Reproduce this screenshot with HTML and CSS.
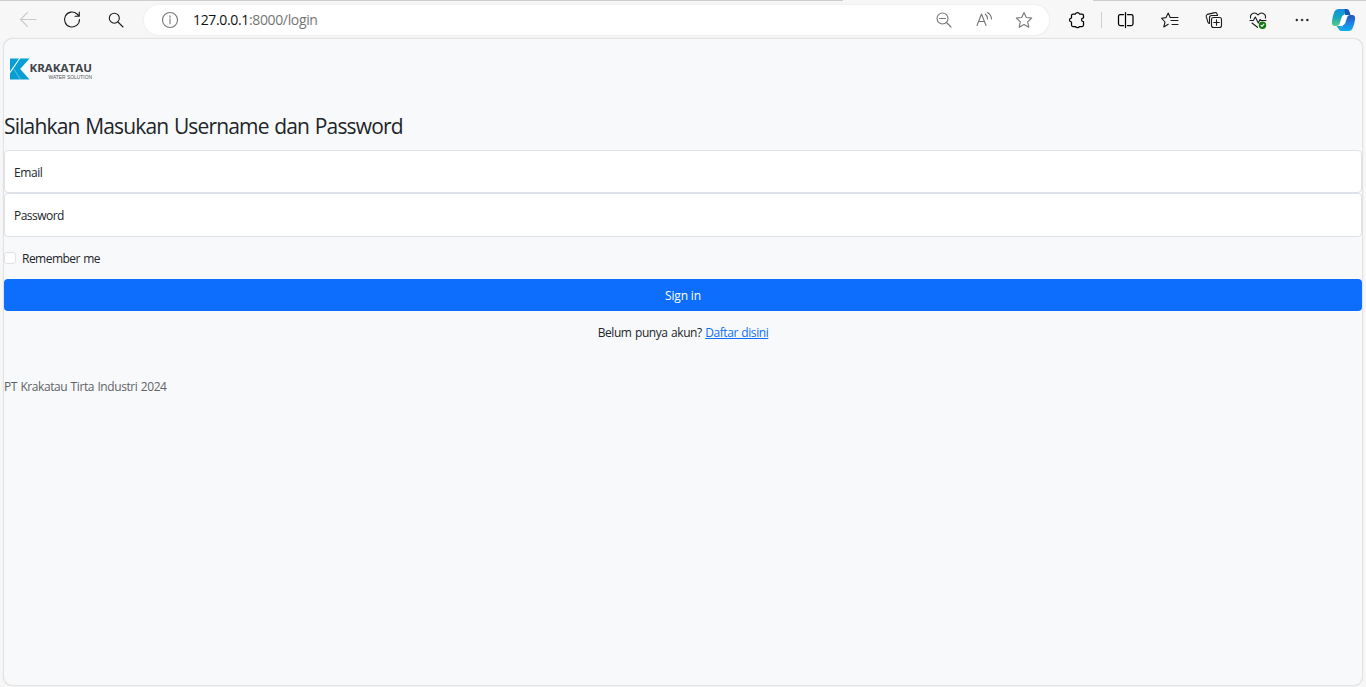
FILE: index.html
```html
<!DOCTYPE html>
<html lang="id">
<head>
<meta charset="utf-8">
<title>Login</title>
<link rel="stylesheet" href="styles.css">
</head>
<body>
<div class="browser">
  <div class="tabline"><span class="tabline-left"></span><span class="tabline-right"></span></div>
  <header class="toolbar">
    <svg class="ico back" viewBox="0 0 24 24"><path d="M20 11.5H4.5M11.5 4.5l-7 7 7 7"/></svg>
    <svg class="ico dark" viewBox="0 0 24 24"><path d="M19.5 11.5a7.5 7.5 0 1 1-2.4-5.5l2 2M19.3 4v4.2h-4.3"/></svg>
    <svg class="ico dark" viewBox="0 0 24 24"><circle cx="10.3" cy="10.2" r="5"/><path d="M14 14l5 5"/></svg>
    <div class="address">
      <svg class="ico grey" viewBox="0 0 24 24"><circle cx="12" cy="12" r="7.5"/><path d="M12 10.7v5M12 7.7v1.5"/></svg>
      <div class="url">127.0.0.1<span class="path">:8000/login</span></div>
      <div class="actions">
        <svg class="ico grey" viewBox="0 0 24 24"><circle cx="10.5" cy="10.5" r="5.5"/><path d="M14.5 14.5l4.5 4.5M7.5 10.5h6"/></svg>
        <svg class="ico grey" viewBox="0 0 24 24"><path d="M5 17.5L9.500 6 14 17.500M6.700 13.500h5.600M13.200 6q2.300 1.700 2.300 5M15.500 4.500q3.700 2.300 4 6.500"/></svg>
        <svg class="ico grey" viewBox="0 0 24 24"><path d="M12 4.500l2.300 5 5.400.6-4 3.700 1.100 5.500-4.800-2.700-4.800 2.700 1.100-5.500-4-3.700 5.400-.6z"/></svg>
      </div>
    </div>
    <svg class="ico dark bold ext" viewBox="0 0 24 24"><path d="M8 6h2.500q.3-1.500 2-1.500t2 1.500H17Q18.500 6 18.500 7.500v2.300q-2 .2-2 1.900t2 1.900v3.400q0 1.500-1.500 1.500h-2.500q-.5 1.200-2 1.200t-2-1.200H8Q6.500 18.500 6.500 17v-3q-2-.3-2-2t2-2V7.500Q6.500 6 8 6z"/></svg>
    <span class="divider"></span>
    <div class="tools">
      <svg class="ico dark bold" viewBox="0 0 24 24"><path d="M9.500 6.500H6.300Q4.500 6.500 4.500 8.300v7.400q0 1.800 1.800 1.800h3.200M13.500 6.500h3.700q1.800 0 1.800 1.800v7.400q0 1.800-1.800 1.800h-3.700M11.500 4.500v15"/></svg>
      <svg class="ico dark" viewBox="0 0 24 24"><path d="M14 9.500h-1.800L10.200 5 8 9.600l-4.500.6L7 14l-1.200 5 4.400-2.700M14 9.500h6M13 12.500h7M14 16.500h6"/></svg>
      <svg class="ico dark" viewBox="0 0 24 24"><rect x="9.500" y="9.500" width="10" height="10" rx="2"/><path d="M14.500 11.700v5.600M11.700 14.500h5.600M7.500 15.500q-1.200-.2-1.600-1.400L4.200 8.400q-.3-1.500 1.200-2l7.500-1.800q1.500-.4 2 1l.6 1.500M7.500 15.500V9.700Q7.500 7.500 9.700 7.500h5.800"/></svg>
      <svg class="ico dark" viewBox="0 0 24 24"><path d="M4.600 10.200c-1-4.700 4.200-7 7.400-3.200 3.200-3.800 8.400-1.500 7.400 3.200M4 12.500h3.300l2-3.500 3 6 1.700-3.500 1 1H20M6 15l5.500 4.300"/><circle class="ok" cx="16.500" cy="17.200" r="3.700"/><path class="tick" d="M15 17.300l1 1 2-2.200"/></svg>
      <svg class="ico dots" viewBox="0 0 24 24"><circle cx="6.700" cy="12" r=".9"/><circle cx="12" cy="12" r=".9"/><circle cx="17.300" cy="12" r=".9"/></svg>
    </div>
    <svg class="copilot" viewBox="0 0 24 24">
      <defs>
        <linearGradient id="left" x1="0" y1="0" x2="0" y2="1"><stop offset="0" stop-color="#128fe0"/><stop offset=".5" stop-color="#19a5bf"/><stop offset="1" stop-color="#5ccc80"/></linearGradient>
        <linearGradient id="right" x1="0" y1="0" x2="0" y2="1"><stop offset="0" stop-color="#2356b5"/><stop offset=".5" stop-color="#1e7fe5"/><stop offset="1" stop-color="#0daff0"/></linearGradient>
      </defs>
      <path fill="url(#left)" d="M7 1h8.500l-3 6q-1.700.3-2.300 2L8 16q-.8 2-3 2H3.500Q0 18 .4 13.500 1 8 3 3.500 4 1 7 1z"/>
      <path fill="url(#right)" d="M17 23H8.500l3-6q1.700-.3 2.300-2L16 8.500Q16.700 7 18.500 7h2q3.500 0 3.100 4.300Q23 16 21 20.500 20 23 17 23z"/>
      <path fill="#1459bb" d="M13 1h2.500q2 .2 2.700 3l.8 3h-5.500z"/>
      <path fill="#14a8df" d="M5 18h5.500l-.5 5q-2.500 0-3.300-2.700z"/>
      <path fill="#fff" d="M11.500 7.500h4l-3 8.500q-.3 1-1.500 1H8.500l2-7z"/>
    </svg>
  </header>

  <main class="page">
    <svg class="logo" viewBox="0 0 84 23" role="img" aria-label="Krakatau Water Solution">
      <path fill="#079fd3" d="M0 .5h9L0 13.500zM10.200.5h9.300L10.200 11 19.500 21.500H0V15.500z"/>
      <path stroke="#f8f9fb" stroke-opacity=".6" stroke-width=".6" d="M3.500 10.500l7 11"/>
      <text class="logo-name" x="19.500" y="14" textLength="62.500" lengthAdjust="spacingAndGlyphs">KRAKATAU</text>
      <text class="logo-sub" x="38.500" y="20.500" textLength="43.500" lengthAdjust="spacingAndGlyphs">WATER SOLUTION</text>
    </svg>
    <h1 class="title">Silahkan Masukan Username dan Password</h1>
    <form class="login">
      <div class="field"><span class="t-email">Email</span></div>
      <div class="field"><span class="t-password">Password</span></div>
      <div class="remember"><span class="box"></span><span class="t-remember">Remember me</span></div>
      <button class="submit" type="button">Sign in</button>
    </form>
    <p class="register">Belum punya akun? <a class="link" href="#">Daftar disini</a></p>
    <p class="copyright">PT Krakatau Tirta Industri 2024</p>
  </main>
</div>
</body>
</html>
```

FILE: styles.css
```css
* { box-sizing: border-box; }

body {
  margin: 0;
  font-family: "Open Sans", "Noto Sans", sans-serif;
  font-size: 12px;
  line-height: 18px;
  letter-spacing: -.42px;
  word-spacing: .7px;
  color: #212529;
}

.browser {
  display: flex;
  flex-direction: column;
  height: 687px;
  background: #f7f7f7;
  overflow: hidden;
}

.tabline { display: flex; justify-content: space-between; height: 1px; }
.tabline-left { width: 843px; background: #cdcdcd; }
.tabline-right { width: 273px; background: #cdcdcd; }

.toolbar {
  display: flex;
  align-items: center;
  height: 38px;
  padding-left: 16px;
}

.toolbar > .ico + .ico { margin-left: 20px; }
.ico {
  flex: none;
  width: 24px;
  height: 24px;
  fill: none;
  stroke-width: 1.1;
  stroke-linecap: round;
  stroke-linejoin: round;
}
.dark { stroke: #1b1b1b; }
.bold { stroke: #000; stroke-width: 1.25; }
.grey { stroke: #767676; }
.back { stroke: #cacaca; }
.dots { fill: #1b1b1b; }
.ok { fill: #107c10; stroke: none; }
.tick { stroke: #fff; }

.address {
  display: flex;
  align-items: center;
  width: 905px;
  height: 30px;
  margin-left: 16px;
  padding: 0 13px 0 14px;
  border-radius: 15px;
  background: #fff;
  box-shadow: 0 0 3px rgba(0, 0, 0, .07);
}
.url {
  margin-left: 11px;
  font-size: 14px;
  letter-spacing: -.35px;
  color: #111;
}
.path { color: #757575; }
.actions { display: flex; gap: 16px; margin-left: auto; }
.ext { margin-left: 16px; }
.divider { width: 1px; height: 16px; margin: 0 12px; background: #cfcfcf; }
.tools { display: flex; gap: 20px; }
.dots { stroke: #1b1b1b; stroke-width: .5; }
.copilot { flex: none; width: 25px; height: 24px; margin-left: 17px; }

.page {
  width: 1358px;
  height: 646px;
  margin-left: 4px;
  padding-top: 19px;
  border-radius: 8px;
  background: #f8f9fb;
  box-shadow: 0 0 2px rgba(0, 0, 0, .3);
}

.logo { display: block; width: 84px; height: 23px; margin-left: 6px; overflow: visible; letter-spacing: 0; word-spacing: 0; }
.logo-name { font: bold 11px "Open Sans", sans-serif; fill: #414449; }
.logo-sub { font: 5.5px "Liberation Sans", sans-serif; fill: #555; }

.title {
  margin: 0;
  padding-top: 32px;
  font-size: 21px;
  font-weight: 400;
  line-height: 26px;
  letter-spacing: -.84px;
  word-spacing: 1px;
  white-space: nowrap;
}

.login { margin-top: 11px; }
.field {
  display: flex;
  align-items: center;
  height: 43px;
  padding: 2px 9px 0;
  border: 1px solid #dee2e6;
  border-radius: 4px;
  background: #fff;
}
.field + .field { height: 44px; padding-top: 1px; }
.t-password, .t-remember { letter-spacing: -.52px; }
.remember { display: flex; align-items: center; gap: 6px; height: 18px; margin-top: 13px; }
.box { width: 12px; height: 12px; margin-top: -2px; border: 1px solid #dee2e6; border-radius: 3px; background: #fff; }
.submit {
  display: block;
  width: 100%;
  height: 32px;
  margin-top: 11px;
  padding: 2px 0 0;
  border: 0;
  border-radius: 4px;
  background: #0d6efd;
  color: #fff;
  font: inherit;
  letter-spacing: -.15px;
}
.register { margin: 13px 0 0; text-align: center; }
.link { color: #0d6efd; text-decoration: underline; }
.copyright { margin: 36px 0 0; color: #5f6367; }
```
